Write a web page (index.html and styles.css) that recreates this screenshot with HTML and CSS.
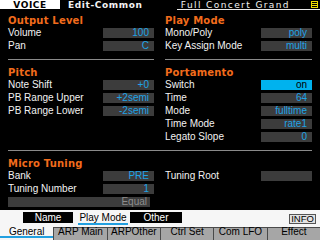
FILE: index.html
```html
<!DOCTYPE html>
<html lang="en">
<head>
  <meta charset="UTF-8">
  <title>Voice Edit-Common</title>
  <link rel="stylesheet" href="styles.css">
</head>
<body>
  <div class="screen">
    <header class="topbar">
      <span class="mode">VOICE</span>
      <span class="page">Edit-Common</span>
      <div class="title">
        <span class="voice-name">Full Concert Grand</span>
        <svg class="menu-icon" viewBox="0 0 7 7" width="7" height="7">
          <rect x="0.5" y="0.5" width="6" height="6" fill="none" stroke="#f0dc00"/>
          <path d="M1 2.5h5M1 4.5h5" stroke="#f0dc00"/>
        </svg>
      </div>
    </header>

    <main class="params">
      <!-- Output Level / Play Mode -->
      <section class="group split">
        <div class="col">
          <h2>Output Level</h2>
          <div class="row"><span class="label">Volume</span><span class="value">100</span></div>
          <div class="row"><span class="label">Pan</span><span class="value">C</span></div>
        </div>
        <div class="col">
          <h2>Play Mode</h2>
          <div class="row"><span class="label">Mono/Poly</span><span class="value">poly</span></div>
          <div class="row"><span class="label">Key Assign Mode</span><span class="value">multi</span></div>
        </div>
      </section>

      <!-- Pitch / Portamento -->
      <section class="group ruled">
        <div class="col">
          <h2>Pitch</h2>
          <div class="row"><span class="label">Note Shift</span><span class="value">+0</span></div>
          <div class="row"><span class="label">PB Range Upper</span><span class="value">+2semi</span></div>
          <div class="row"><span class="label">PB Range Lower</span><span class="value">-2semi</span></div>
        </div>
        <div class="col">
          <h2>Portamento</h2>
          <div class="row"><span class="label">Switch</span><span class="value on">on</span></div>
          <div class="row"><span class="label">Time</span><span class="value">64</span></div>
          <div class="row"><span class="label">Mode</span><span class="value">fulltime</span></div>
          <div class="row"><span class="label">Time Mode</span><span class="value">rate1</span></div>
          <div class="row"><span class="label">Legato Slope</span><span class="value">0</span></div>
        </div>
      </section>

      <!-- Micro Tuning -->
      <section class="group">
        <div class="col">
          <h2>Micro Tuning</h2>
          <div class="row"><span class="label">Bank</span><span class="value">PRE</span></div>
          <div class="row"><span class="label">Tuning Number</span><span class="value">1</span></div>
          <div class="row"><span class="value wide">Equal</span></div>
        </div>
        <div class="col untitled">
          <div class="row"><span class="label">Tuning Root</span><span class="value"></span></div>
        </div>
      </section>
    </main>

    <div class="subtabs">
      <span class="subtab">Name</span>
      <span class="subtab active">Play Mode</span>
      <span class="subtab other">Other</span>
      <span class="info-btn">INFO</span>
    </div>

    <nav class="tabs">
      <span class="tab active">General</span>
      <span class="tab">ARP Main</span>
      <span class="tab">ARPOther</span>
      <span class="tab">Ctrl Set</span>
      <span class="tab">Com LFO</span>
      <span class="tab">Effect</span>
    </nav>
  </div>
</body>
</html>
```

FILE: styles.css
```css
body {
  margin: 0;
  background: #000;
  color: #f2f2f2;
  font-family: "Liberation Sans", Arial, sans-serif;
  font-size: 10px;
}
.screen {
  width: 320px;
  height: 240px;
  overflow: hidden;
  display: flex;
  flex-direction: column;
}

/* top bar */
.topbar {
  height: 10px;
  flex: none;
  display: flex;
  font-family: "DejaVu Sans", sans-serif;
  font-size: 9px;
  line-height: 11px;
  white-space: nowrap;
}
.mode {
  width: 60px;
  height: 9px;
  background: #fff;
  color: #000;
  font-weight: bold;
  text-align: center;
  letter-spacing: 0.6px;
}
.page {
  margin-left: 8px;
  font-weight: bold;
  letter-spacing: 0.6px;
}
.title {
  margin-left: auto;
  height: 9px;
  display: flex;
  padding-left: 4px;
  border-bottom: 1px solid #e8e8e8;
}
.voice-name {
  letter-spacing: 1.4px;
}
.menu-icon {
  align-self: center;
  margin: 0 2px 0 21px;
}

/* parameter area */
.params {
  flex: 1;
  padding: 4px 8px 0;
}
.group {
  display: grid;
  grid-template-columns: 146px 147px;
  column-gap: 11px;
  align-items: start;
}
.group + .group {
  margin-top: 6px;
}
.group.split {
  align-items: stretch;
}
.group.split .col,
.group.ruled {
  padding-bottom: 8px;
  border-bottom: 1px solid #8a8a8a;
}
h2 {
  margin: 0 0 1px;
  height: 13px;
  line-height: 13px;
  font-family: "DejaVu Sans", sans-serif;
  font-size: 10px;
  font-weight: bold;
  letter-spacing: 0.2px;
  color: #f26c1c;
}
.col.untitled {
  padding-top: 14px;
}
.row {
  display: flex;
  justify-content: space-between;
  align-items: center;
  height: 10px;
  line-height: 10px;
}
.row + .row {
  margin-top: 3px;
}
.value {
  width: 51px;
  height: 10px;
  padding-right: 5px;
  box-sizing: border-box;
  background: #3c3c3c;
  color: #1fa3e6;
  text-align: right;
}
.value.on {
  background: #00b2ee;
  color: #000;
}
.value.wide {
  width: 142px;
  padding-right: 3px;
  color: #8e8e8e;
}

/* sub tabs */
.subtabs {
  height: 17px;
  flex: none;
  box-sizing: border-box;
  display: flex;
  align-items: flex-start;
  padding: 2px 4px 0 23px;
  background: #f6f6f6;
}
.subtab {
  width: 50px;
  height: 11px;
  line-height: 11px;
  text-align: center;
  background: #000;
  color: #fff;
}
.subtab.active {
  margin-left: 5px;
  background: transparent;
  color: #000;
  border-bottom: 2px solid #22a0e0;
}
.subtab.other {
  width: 52px;
  margin-left: 2px;
}
.info-btn {
  margin: 2px 0 0 auto;
  width: 27px;
  height: 10px;
  box-sizing: border-box;
  border: 1px solid #555;
  background: #e2e2e2;
  color: #000;
  font-size: 9.5px;
  line-height: 8px;
  text-align: center;
}

/* bottom tabs */
.tabs {
  height: 13px;
  flex: none;
  display: grid;
  grid-template-columns: repeat(6, 1fr);
  background: #f6f6f6;
}
.tab {
  background: #a6a6a6;
  border-top: 1px solid #4a4a4a;
  border-left: 1px solid #4a4a4a;
  color: #000;
  text-align: center;
  line-height: 8px;
  white-space: nowrap;
}
.tab.active {
  background: #f6f6f6;
  border-top-color: #f6f6f6;
  border-left: none;
  box-shadow: inset 0 -2px #f6f6f6, inset 0 -4px #22a0e0;
}
```
